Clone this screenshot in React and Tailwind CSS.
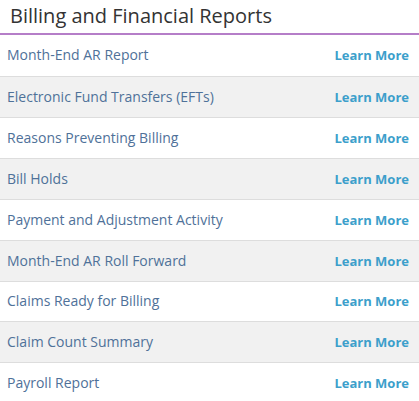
export default function App() {
  const items = [
    "Month-End AR Report",
    "Electronic Fund Transfers (EFTs)",
    "Reasons Preventing Billing",
    "Bill Holds",
    "Payment and Adjustment Activity",
    "Month-End AR Roll Forward",
    "Claims Ready for Billing",
    "Claim Count Summary",
    "Payroll Report",
  ];
  return (
    <div className="w-[419px] h-[401px] overflow-hidden bg-white" style={{ fontFamily: '"Open Sans", sans-serif' }}>
      <div className="h-[35px] flex items-center pl-[10px] pb-[1px] text-[20px] text-[#333333] border-b-[2px] border-[#b57ec8]">
        Billing and Financial Reports
      </div>
      {items.map((t, i) => (
        <div
          key={t}
          className={`${i === 6 ? "h-[40px]" : "h-[41px]"} flex items-center justify-between pl-[7px] pr-[10px] ${i > 0 ? "border-t border-[#dddddd]" : ""} ${i % 2 === 1 ? "bg-[#f1f1f1]" : "bg-white"}`}
        >
          <span className="text-[14px] text-[#4f7199] pb-[2px]">{t}</span>
          <span className="text-[13px] font-bold text-[#3c9fcb] pt-[1px]">Learn More</span>
        </div>
      ))}
    </div>
  );
}
